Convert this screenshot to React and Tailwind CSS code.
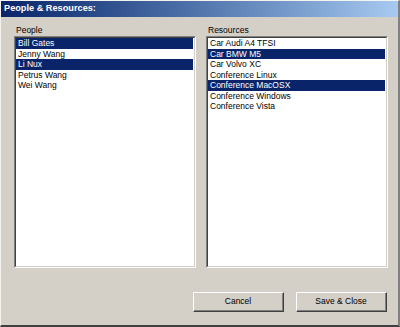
import React from "react";

const people = [
  { t: "Bill Gates", s: true },
  { t: "Jenny Wang" },
  { t: "Li Nux", s: true },
  { t: "Petrus Wang" },
  { t: "Wei Wang" },
];
const resources = [
  { t: "Car Audi A4 TFSI" },
  { t: "Car BMW M5", s: true },
  { t: "Car Volvo XC" },
  { t: "Conference Linux" },
  { t: "Conference MacOSX", s: true },
  { t: "Conference Windows" },
  { t: "Conference Vista" },
];

function ListBox({ label, items }) {
  return (
    <div className="flex flex-col w-[182px]">
      <div className="h-[19px] pt-[8px] pl-[2px] text-[8.5px] leading-[10px] text-black">{label}</div>
      <div className="h-[232px] border-t border-l border-t-[#808080] border-l-[#808080] border-b border-r border-b-white border-r-white">
        <div className="h-full border-t border-l border-t-[#404040] border-l-[#404040] border-b border-r border-b-[#d4d0c8] border-r-[#d4d0c8] bg-white pr-[1px]">
          {items.map((it) => (
            <div
              key={it.t}
              className={
                "h-[10.5px] pl-[2px] text-[8.5px] leading-[10.5px] whitespace-nowrap " +
                (it.s ? "bg-[#0a246a] text-white" : "text-black")
              }
            >
              {it.t}
            </div>
          ))}
        </div>
      </div>
    </div>
  );
}

function Btn({ children }) {
  return (
    <div className="w-[91px] h-[20px] border-t border-l border-t-white border-l-white border-b border-r border-b-[#404040] border-r-[#404040]">
      <div className="h-full border-b border-r border-b-[#808080] border-r-[#808080] flex items-center justify-center text-[8.5px] text-black">
        {children}
      </div>
    </div>
  );
}

export default function App() {
  return (
    <div
      className="w-[400px] h-[327px] bg-[#d4d0c8] border-t border-l border-t-[#f4f3ef] border-l-[#f4f3ef] border-b-2 border-r-2 border-b-[#404040] border-r-[#808080] flex flex-col"
      style={{ fontFamily: '"Liberation Sans", Arial, sans-serif' }}
    >
      <div className="h-[16px] bg-gradient-to-r from-[#0a246a] to-[#a6caf0] flex items-center pl-[3px] text-white font-bold text-[9.2px] leading-none">
        People &amp; Resources:
      </div>
      <div className="flex gap-[10px] pl-[13px]">
        <ListBox label="People" items={people} />
        <ListBox label="Resources" items={resources} />
      </div>
      <div className="flex justify-end gap-[12px] pr-[11px] mt-[24px]">
        <Btn>Cancel</Btn>
        <Btn>Save &amp; Close</Btn>
      </div>
    </div>
  );
}
